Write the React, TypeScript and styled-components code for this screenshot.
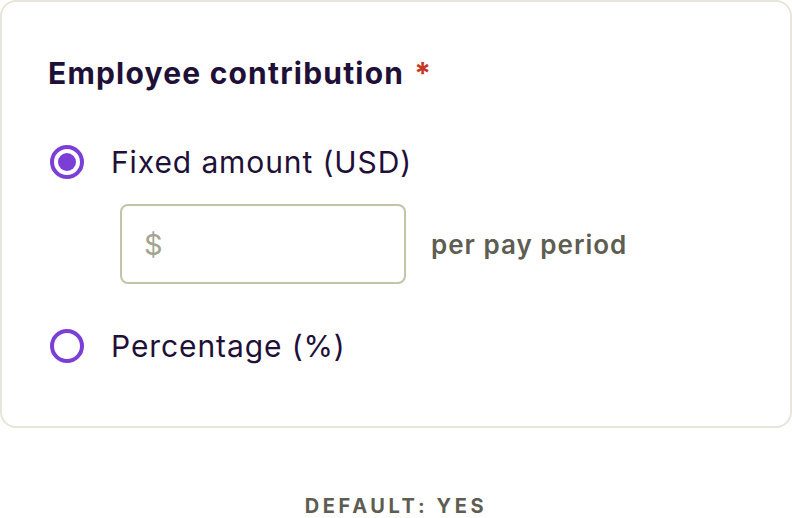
import React from "react";
import styled, { createGlobalStyle } from "styled-components";

const GlobalStyle = createGlobalStyle`
  html, body {
    margin: 0;
    padding: 0;
    background: #ffffff;
  }
  body {
    font-family: Inter, "Noto Sans", sans-serif;
  }
`;

const Page = styled.div`
  width: 792px;
  display: flex;
  flex-direction: column;
  box-sizing: border-box;
`;

const Card = styled.div`
  width: 792px;
  height: 428px;
  flex-shrink: 0;
  box-sizing: border-box;
  border: 2px solid #e8e6da;
  border-radius: 16px;
  padding: 51px 0 0 46px;
  display: flex;
  flex-direction: column;
`;

const Title = styled.h2`
  margin: 0;
  font-size: 30px;
  font-weight: 700;
  color: #1f1038;
  letter-spacing: 1.2px;
  line-height: 40px;
`;

const Required = styled.span`
  color: #c7361f;
  margin-left: 10px;
`;

const Option = styled.label<{ $top: number }>`
  display: flex;
  align-items: center;
  gap: 27px;
  margin-top: ${(p) => p.$top}px;
  cursor: pointer;
`;

const Radio = styled.span<{ $checked?: boolean }>`
  width: 34px;
  height: 34px;
  box-sizing: border-box;
  margin-left: 2px;
  border: 4px solid #7b3fd8;
  border-radius: 50%;
  display: flex;
  align-items: center;
  justify-content: center;
  &::after {
    content: "";
    width: 18px;
    height: 18px;
    border-radius: 50%;
    background: #7b3fd8;
    display: ${(p) => (p.$checked ? "block" : "none")};
  }
`;

const OptionText = styled.span`
  font-size: 30px;
  color: #1f1038;
  line-height: 40px;
  letter-spacing: 0.9px;
`;

const AmountRow = styled.div`
  display: flex;
  align-items: center;
  gap: 25px;
  margin: 22px 0 0 72px;
`;

const AmountField = styled.div`
  width: 286px;
  height: 80px;
  box-sizing: border-box;
  border: 2px solid #c5c3a8;
  border-radius: 8px;
  display: flex;
  align-items: center;
  padding-left: 22px;
  font-size: 29px;
  color: #a3a390;
`;

const Suffix = styled.span`
  font-size: 26px;
  font-weight: 600;
  color: #5e5d52;
  letter-spacing: 1px;
`;

const Footer = styled.div`
  margin-top: 69px;
  text-align: center;
  font-size: 20px;
  font-weight: 700;
  letter-spacing: 3.6px;
  color: #5e5d52;
  line-height: 18px;
`;

export default function App() {
  return (
    <>
      <GlobalStyle />
      <Page>
        <Card>
          <Title>
            Employee contribution<Required>*</Required>
          </Title>
          <Option $top={49}>
            <Radio $checked />
            <OptionText>Fixed amount (USD)</OptionText>
          </Option>
          <AmountRow>
            <AmountField>$</AmountField>
            <Suffix>per pay period</Suffix>
          </AmountRow>
          <Option $top={42}>
            <Radio />
            <OptionText>Percentage (%)</OptionText>
          </Option>
        </Card>
        <Footer>DEFAULT: YES</Footer>
      </Page>
    </>
  );
}
